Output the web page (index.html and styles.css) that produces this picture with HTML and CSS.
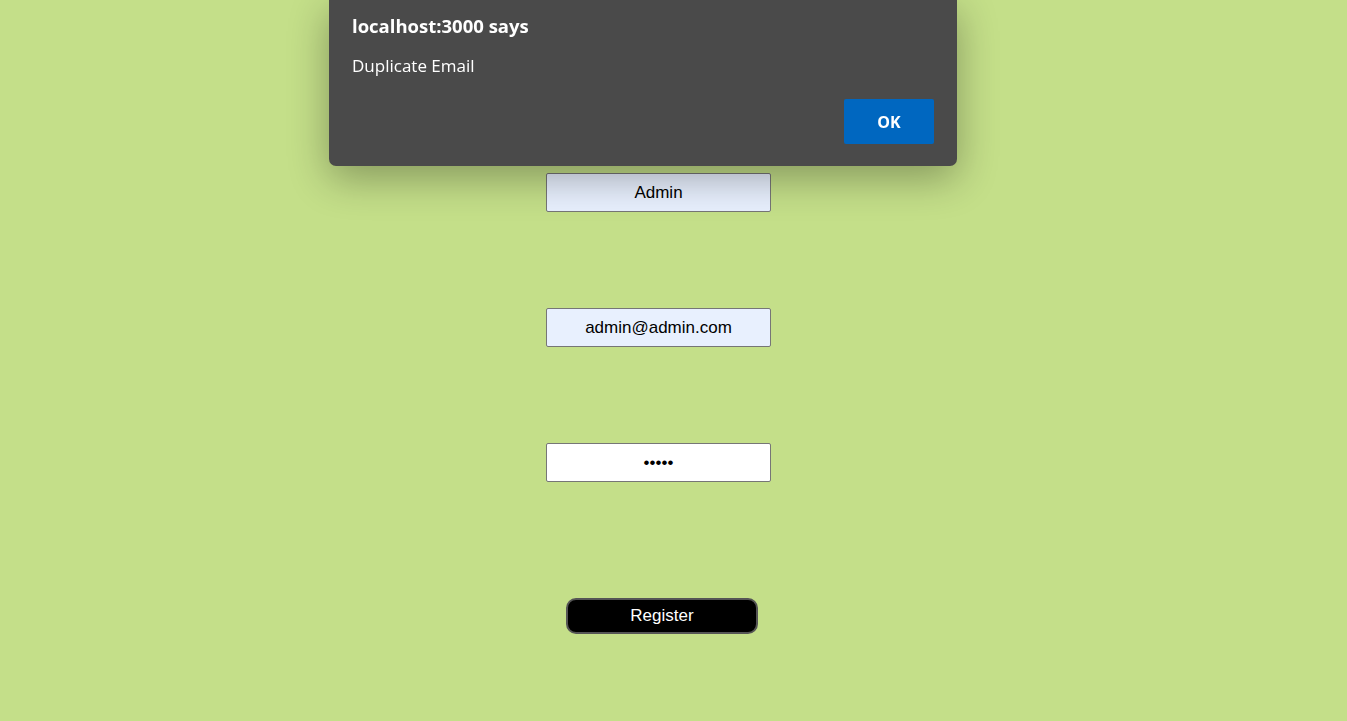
FILE: index.html
```html
<!DOCTYPE html>
<html lang="en">
<head>
    <meta charset="UTF-8">
    <meta name="viewport" content="width=device-width, initial-scale=1.0">
    <title>Register</title>
    <link rel="stylesheet" href="styles.css">
</head>
<body>

    <!-- Formulario de registro -->
    <div class="register-form">
        <input type="text" class="field autofill" value="Admin">
        <input type="email" class="field autofill" value="admin@admin.com">
        <input type="password" class="field" value="admin">
        <button class="register-btn">Register</button>
    </div>

    <!-- Alerta del navegador -->
    <div class="alert-box">
        <div class="alert-title">localhost:3000 says</div>
        <div class="alert-message">Duplicate Email</div>
        <div class="alert-actions">
            <button class="alert-ok">OK</button>
        </div>
    </div>

</body>
</html>
```

FILE: styles.css
```css
body {
    font-family: "Liberation Sans", Arial, sans-serif;
    background-color: #c4df89;
    margin: 0;
    height: 721px;
    overflow: hidden;
}

.register-form {
    display: flex;
    flex-direction: column;
    align-items: center;
    padding-top: 173px;
    padding-right: 30px;
}

.field {
    box-sizing: border-box;
    width: 225px;
    height: 39px;
    margin-bottom: 96px;
    border: 1px solid #767676;
    border-radius: 2px;
    background-color: white;
    font-family: "Liberation Sans", Arial, sans-serif;
    font-size: 17px;
    color: black;
    text-align: center;
    padding: 0 6px;
}

.field.autofill {
    background-color: #e8f0fe;
}

.register-btn {
    margin-top: 20px;
    margin-left: 7px;
    width: 192px;
    height: 36px;
    background-color: black;
    color: white;
    border: 2px solid #555;
    border-radius: 10px;
    font-family: "Liberation Sans", Arial, sans-serif;
    font-size: 17px;
    cursor: pointer;
}

.alert-box {
    position: fixed;
    top: 0;
    left: 329px;
    width: 628px;
    height: 166px;
    box-sizing: border-box;
    padding: 14px 23px 22px 23px;
    background-color: #4a4a4a;
    border-radius: 0 0 7px 7px;
    box-shadow: 0 12px 40px rgba(0, 0, 0, 0.32);
    color: white;
    font-family: "Open Sans", "Noto Sans", sans-serif;
    display: flex;
    flex-direction: column;
}

.alert-title {
    font-size: 18.5px;
    font-weight: 700;
    line-height: 24px;
}

.alert-message {
    margin-top: 17px;
    font-size: 17px;
    line-height: 22px;
}

.alert-actions {
    margin-top: auto;
    display: flex;
    justify-content: flex-end;
}

.alert-ok {
    width: 90px;
    height: 45px;
    border: none;
    border-radius: 2px;
    background-color: #0067c0;
    color: white;
    font-family: "Open Sans", "Noto Sans", sans-serif;
    font-size: 16px;
    font-weight: 700;
}
```
